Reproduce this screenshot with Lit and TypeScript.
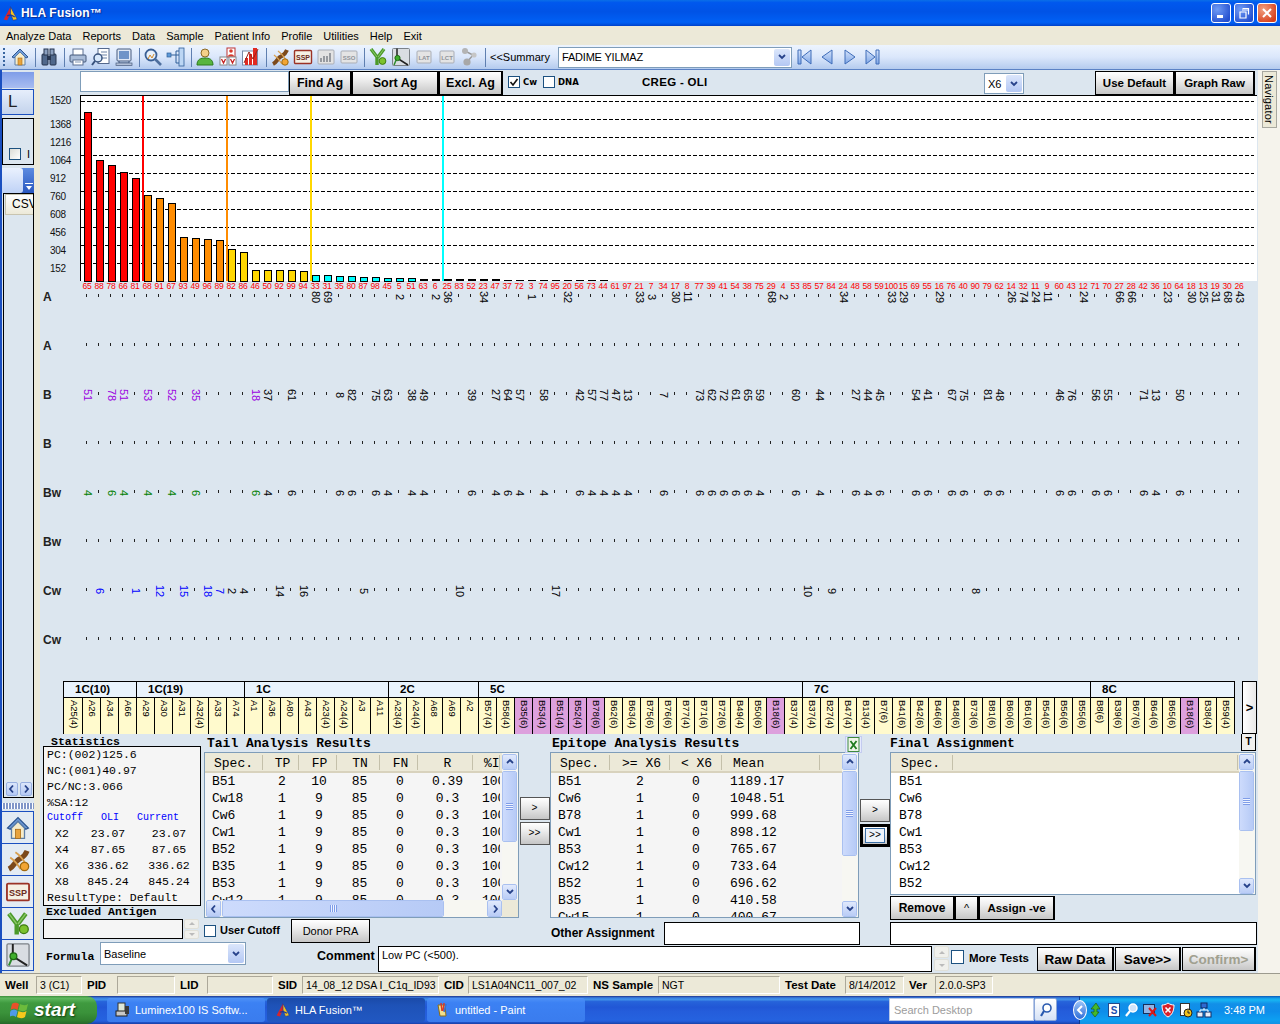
import { LitElement, html, svg, css, type TemplateResult } from 'lit';
import { customElement } from 'lit/decorators.js';

const LABELS = '65 88 78 66 81 68 91 67 93 49 96 89 82 86 46 50 92 99 94 33 31 35 80 87 98 45 5 51 63 6 25 83 52 23 47 37 72 3 74 95 20 56 73 44 61 97 21 7 34 17 8 77 39 41 54 38 75 29 4 53 85 57 84 24 48 58 59 100 15 69 55 16 76 40 90 79 62 14 32 11 9 60 43 12 71 70 27 28 42 36 10 64 18 13 19 30 26'.split(' ');
const TOPS = [112, 160, 165, 172, 178, 195, 198, 203, 237, 238, 239, 240, 249, 252, 270, 270, 270, 270, 271, 275, 275, 276, 276, 277, 277, 278, 278, 278];
const Y_LABELS: Array<[string, number]> = [['1520', 100], ['1368', 124], ['1216', 142], ['1064', 160], ['912', 178], ['760', 196], ['608', 214], ['456', 232], ['304', 250], ['152', 268]];

const B_ROW: Record<number, string> = { 0: '51', 2: '78', 3: '51', 5: '53', 7: '52', 9: '35', 14: '18', 15: '37', 17: '61', 21: '8', 22: '82', 24: '75', 25: '63', 27: '38', 28: '49', 32: '39', 34: '27', 35: '64', 36: '57', 38: '58', 41: '42', 42: '57', 43: '77', 44: '47', 45: '13', 48: '7', 51: '73', 52: '62', 53: '72', 54: '61', 55: '65', 56: '59', 59: '60', 61: '44', 64: '27', 65: '44', 66: '45', 69: '54', 70: '41', 72: '67', 73: '75', 75: '81', 76: '48', 81: '46', 82: '76', 84: '56', 85: '55', 88: '71', 89: '13', 91: '50' };
const BW_ROW: Record<number, string> = { 0: '4', 2: '6', 3: '4', 5: '4', 7: '4', 9: '6', 14: '6', 15: '4', 17: '6', 21: '6', 22: '6', 24: '6', 25: '4', 27: '4', 28: '4', 32: '6', 34: '4', 35: '6', 36: '4', 38: '4', 41: '6', 42: '4', 43: '4', 44: '4', 45: '4', 48: '6', 51: '6', 52: '6', 53: '6', 54: '6', 55: '6', 56: '4', 59: '6', 61: '4', 64: '6', 65: '4', 66: '6', 69: '6', 70: '6', 72: '6', 73: '6', 75: '6', 76: '6', 81: '6', 82: '6', 84: '6', 85: '6', 88: '6', 89: '4', 91: '6' };
const A_ROW: Record<number, string> = { 19: '80', 20: '69', 26: '2', 29: '2', 30: '36', 33: '34', 37: '1', 40: '32', 46: '33', 47: '3', 49: '30', 50: '11', 57: '68', 58: '2', 63: '34', 67: '33', 68: '29', 71: '29', 77: '26', 78: '74', 79: '24', 80: '11', 83: '24', 86: '66', 87: '66', 90: '23', 92: '30', 93: '25', 94: '31', 95: '68', 96: '43' };
const CW_ROW: Record<number, string> = { 1: '6', 4: '1', 6: '12', 8: '15', 10: '18', 11: '7', 12: '2', 13: '4', 16: '14', 18: '16', 23: '5', 31: '10', 39: '17', 60: '10', 62: '9', 74: '8' };
const PURPLE = new Set([0, 2, 3, 5, 7, 9, 14]);
const BLUE = new Set([1, 4, 6, 8, 10, 11]);

const ROWS: Array<{ name: string; cells: Record<number, string>; colored: Set<number>; color: string }> = [
  { name: 'A', cells: A_ROW, colored: new Set(), color: '#000' },
  { name: 'A', cells: {}, colored: new Set(), color: '#000' },
  { name: 'B', cells: B_ROW, colored: PURPLE, color: '#9a00e0' },
  { name: 'B', cells: {}, colored: new Set(), color: '#000' },
  { name: 'Bw', cells: BW_ROW, colored: PURPLE, color: '#008000' },
  { name: 'Bw', cells: {}, colored: new Set(), color: '#000' },
  { name: 'Cw', cells: CW_ROW, colored: BLUE, color: '#0000ff' },
  { name: 'Cw', cells: {}, colored: new Set(), color: '#000' },
];

const GROUPS: Array<[string, string[]]> = [
  ['1C(10)', ['A25(4)', 'A26', 'A34', 'A66']],
  ['1C(19)', ['A29', 'A30', 'A31', 'A32(4)', 'A33', 'A74']],
  ['1C', ['A1', 'A36', 'A80', 'A43', 'A23(4)', 'A24(4)', 'A3', 'A11']],
  ['2C', ['A23(4)', 'A24(4)', 'A68', 'A69', 'A2']],
  ['5C', ['B57(4)', 'B58(4)', '*B35(6)', '*B53(4)', '*B51(4)', '*B52(4)', '*B78(6)', 'B62(6)', 'B63(4)', 'B75(6)', 'B76(6)', 'B77(4)', 'B71(6)', 'B72(6)', 'B49(4)', 'B50(6)', '*B18(6)', 'B37(4)']],
  ['7C', ['B37(4)', 'B27(4)', 'B47(4)', 'B13(4)', 'B7(6)', 'B41(6)', 'B42(6)', 'B46(6)', 'B48(6)', 'B73(6)', 'B81(6)', 'B60(6)', 'B61(6)', 'B54(6)', 'B56(6)', 'B55(6)']],
  ['8C', ['B8(6)', 'B39(6)', 'B67(6)', 'B64(6)', 'B65(6)', '*B18(6)', 'B38(4)', 'B59(4)']],
];

const tip = (i: number) => 87 + 12 * i;

// 20x20 toolbar glyphs, also scaled up in the left strip
const ICONS: Record<string, TemplateResult> = {
  home: svg`<path d="M2 10 10 2l8 8-2 1-6-6-6 6z" fill="#6f9bd8" stroke="#2c5590"/><path d="M5 10v8h10v-8l-5-5z" fill="#f6eccb" stroke="#5d7fa8"/><rect x="8" y="11" width="4" height="7" fill="#e8a33c" stroke="#a86c16" stroke-width=".6"/>`,
  binoc: svg`<rect x="3" y="7" width="6" height="11" rx="1" fill="#50688c" stroke="#26344e"/><rect x="11" y="7" width="6" height="11" rx="1" fill="#50688c" stroke="#26344e"/><rect x="5" y="2" width="4" height="6" fill="#8ba0c0" stroke="#26344e"/><rect x="11" y="2" width="4" height="6" fill="#8ba0c0" stroke="#26344e"/><rect x="8" y="9" width="4" height="4" fill="#26344e"/>`,
  print: svg`<rect x="5" y="2" width="10" height="7" fill="#fff" stroke="#5a6f92"/><rect x="2" y="8" width="16" height="7" rx="1" fill="#a9bcd8" stroke="#44587a"/><rect x="5" y="13" width="10" height="5" fill="#fff" stroke="#5a6f92"/><path d="M7 15h6" stroke="#8296b4"/>`,
  preview: svg`<rect x="7" y="1.500" width="11" height="15" fill="#fff" stroke="#55698c"/><path d="M10 5h6M10 8h6M10 11h6" stroke="#6d82a5"/><circle cx="7" cy="11" r="4" fill="#d8e8fb" stroke="#38527c" stroke-width="1.500"/><path d="M4 14 1 18" stroke="#38527c" stroke-width="2"/>`,
  monitor: svg`<rect x="3" y="2" width="14" height="12" rx="1" fill="#dfe8f5" stroke="#465b7e"/><rect x="5" y="4" width="10" height="8" fill="#6f94c8"/><path d="M5 14v3h10v-3" fill="#8a9dbb" stroke="#465b7e"/><rect x="2" y="16" width="16" height="2.500" fill="#b3c1d8" stroke="#465b7e" stroke-width=".7"/>`,
  search: svg`<circle cx="8" cy="8" r="5.500" fill="#e8f1fc" stroke="#3a5f94" stroke-width="1.800"/><path d="m12 12 6 6" stroke="#4f6f9e" stroke-width="2.600"/><path d="m5 12 2-4 2 3 2-4" fill="none" stroke="#d08a2c"/>`,
  tree: svg`<rect x="1" y="6" width="4" height="4" fill="#5f9ad8" stroke="#2f5e98" stroke-width=".7"/><rect x="13" y="1" width="5" height="18" fill="#bcd6f4" stroke="#2f5e98" stroke-width=".8"/><path d="M5 8h8M13 4h-3v12h3" fill="none" stroke="#2f5e98"/>`,
  person: svg`<circle cx="10" cy="6" r="4" fill="#f4d089" stroke="#8c6a28"/><path d="M2 18c0-6 4-7 8-7s8 1 8 7z" fill="#58b53f" stroke="#2e7a1d"/>`,
  cards: svg`<rect x="9" y="1" width="8" height="9" fill="#fff" stroke="#b33"/><circle cx="13" cy="4" r="1.800" fill="#d8392c"/><path d="M10 9.500c0-3 6-3 6 0" fill="#d8392c"/><rect x="2" y="10" width="7" height="8" fill="#fff" stroke="#888"/><rect x="11" y="10" width="7" height="8" fill="#fff" stroke="#888"/><path d="m3.500 12 2 4 2-4M12.500 12l2 4 2-4" fill="none" stroke="#c62222" stroke-width="1.300"/>`,
  chart: svg`<rect x="1.500" y="4" width="15" height="14" fill="#fff" stroke="#7a8ca8"/><rect x="4" y="11" width="3" height="7" fill="#e12a20"/><rect x="8" y="7" width="3" height="11" fill="#e12a20"/><rect x="12" y="1" width="4" height="17" fill="#e12a20"/><path d="M3 16 8 5l4 7 5-10" fill="none" stroke="#9a2016"/>`,
  dna: svg`<path d="M3 17C7 15 7 12 10 10s5-2 7-7" fill="none" stroke="#7c4a1c" stroke-width="4"/><path d="M4 8c3 2 5 4 8 9M8 4c3 2 5 4 8 9" stroke="#d8a050" stroke-width="1.400" fill="none"/><circle cx="15" cy="15" r="3.200" fill="#f2a533" stroke="#a06a10"/>`,
  ssp: svg`<rect x="1.500" y="3.500" width="17" height="13" rx="1" fill="#f5f0e4" stroke="#9b3226" stroke-width="1.400"/><text x="10" y="13" font-size="7" font-weight="700" text-anchor="middle" fill="#6b2a20" font-family="Liberation Sans">SSP</text>`,
  graphoff: svg`<rect x="2" y="3" width="16" height="14" rx="1" fill="#e3e3e3" stroke="#a9adb5"/><path d="M5 15v-4M8 15V9M11 15v-6M14 15V6" stroke="#8e9298" stroke-width="1.800"/>`,
  sso: svg`<rect x="2" y="4" width="16" height="12" rx="1" fill="#e4e4e4" stroke="#a9adb5"/><text x="10" y="12.500" font-size="6" font-weight="700" text-anchor="middle" fill="#8e9298" font-family="Liberation Sans">SSO</text>`,
  yab: svg`<path d="M3 2l6 8v8M16 2l-6 8" fill="none" stroke="#4b9a2a" stroke-width="3.400"/><path d="M3 2l6 8M16 2l-6 8" fill="none" stroke="#8cc86a" stroke-width="1"/><circle cx="14.500" cy="14" r="3.400" fill="#7cc22e" stroke="#3e7c12"/>`,
  kin: svg`<rect x="1.500" y="1.500" width="17" height="17" rx="1" fill="#d9dde2" stroke="#7c8288"/><path d="M6 1.500V11l11 7" fill="none" stroke="#222" stroke-width="1.500"/><path d="M3 18 6 11" stroke="#2c8a2c" stroke-width="1.500"/><circle cx="6.500" cy="11" r="2.600" fill="#3fae2c" stroke="#1d6a12"/>`,
  lat: svg`<rect x="3" y="4" width="14" height="12" rx="1" fill="#e4e4e4" stroke="#a9adb5"/><text x="10" y="12.500" font-size="6" font-weight="700" text-anchor="middle" fill="#8e9298" font-family="Liberation Sans">LAT</text>`,
  lct: svg`<rect x="3" y="4" width="14" height="12" rx="1" fill="#e4e4e4" stroke="#a9adb5"/><text x="10" y="12.500" font-size="6" font-weight="700" text-anchor="middle" fill="#8e9298" font-family="Liberation Sans">LCT</text>`,
  mol: svg`<path d="M5 4l8 4-5 6" stroke="#999" stroke-width="1.400" fill="none"/><circle cx="5" cy="4" r="3" fill="#b4b4b4"/><circle cx="14" cy="8" r="2.600" fill="#c6c6c6"/><circle cx="7" cy="15" r="3.600" fill="#a8a8a8"/>`,
  logo: svg`<path d="M10 2 2 17l4 1 4-8z" fill="#d8252c"/><path d="M10 2l8 15-5 1-3-8z" fill="#f6c21c" stroke="#173a9c" stroke-width=".8"/><path d="M6 13c3-2 6-1 9 1" fill="none" stroke="#173a9c" stroke-width="1.400"/>`,
};

// system tray, left to right
const TRAY: TemplateResult[] = [
  svg`<path d="M8 1 3 7h3v3H3l4 5 4-5H9V7h3z" fill="#46b82a" stroke="#1d5e12" stroke-width=".7"/>`,
  svg`<rect x="2.500" y="1.500" width="11" height="13" fill="#fff" stroke="#234a8a"/><text x="8" y="12" font-size="10" font-weight="700" text-anchor="middle" fill="#1d4fb0" font-family="Liberation Sans">S</text>`,
  svg`<circle cx="9" cy="6" r="4" fill="#cfe4fb" stroke="#fff" stroke-width="1.500"/><path d="M6 9l-4 5" stroke="#fff" stroke-width="2.200"/>`,
  svg`<rect x="1.500" y="2.500" width="11" height="9" fill="#8fb4e6" stroke="#16305c"/><path d="m7 6 7 8m0-8-7 8" stroke="#d81818" stroke-width="2"/>`,
  svg`<path d="M8 1c2 1.500 4 2 6 2 0 6-2 10-6 12C4 13 2 9 2 3c2 0 4-.5 6-2z" fill="#d8202a" stroke="#fff"/><path d="m5.500 5.500 5 5m0-5-5 5" stroke="#fff" stroke-width="1.600"/>`,
  svg`<rect x="2.500" y="1.500" width="9" height="12" fill="#fff" stroke="#333"/><circle cx="10" cy="11" r="4" fill="#f2c21c" stroke="#222"/><path d="M10 8.500V11h2" stroke="#222" fill="none"/>`,
  svg`<rect x="5" y="1" width="6" height="5" fill="#2f6ad0" stroke="#0e2a66"/><rect x="1" y="10" width="6" height="5" fill="#e8eef8" stroke="#0e2a66"/><rect x="9" y="10" width="6" height="5" fill="#e8eef8" stroke="#0e2a66"/><path d="M8 6v2M4 10V8h8v2" stroke="#fff" fill="none"/>`,
];

const icon = (name: string, size = 20) =>
  html`<svg class="ic" width=${size} height=${size} viewBox="0 0 20 20">${ICONS[name]}</svg>`;

const chev = (dir: 'up' | 'down' | 'left' | 'right') => {
  const d = { up: 'M2 6 5 3l3 3', down: 'M2 3l3 3 3-3', left: 'M6 1.500 3 5l3 3.500', right: 'M4 1.500 7 5 4 8.500' }[dir];
  return html`<svg width="10" height="10" viewBox="0 0 10 10"><path d=${d} fill="none" stroke="#27428a" stroke-width="1.800"/></svg>`;
};

type Col = [number, string, number, number];

@customElement('app-root')
export class AppRoot extends LitElement {
  static styles = css`
    :host {
      display: flex;
      flex-direction: column;
      width: 1280px;
      height: 1024px;
      overflow: hidden;
      font-family: 'Liberation Sans', Arial, sans-serif;
      font-size: 11px;
      color: #000;
      background: #dce6ef;
    }
    svg { display: block; flex: none; }

    /* window chrome */
    .title {
      height: 26px;
      flex: none;
      display: flex;
      align-items: center;
      padding: 0 3px 0 2px;
      color: #fff;
      font-size: 12px;
      font-weight: 700;
      letter-spacing: .2px;
      text-shadow: 1px 1px 1px #0a2a90;
      background: linear-gradient(#0a6fe8 0, #0058ee 10%, #0053e6 45%, #0060f5 85%, #0055e5 92%, #0040c8 100%);
    }
    .title span { margin-left: 2px; flex: 1; }
    .wbtn {
      width: 20px;
      height: 20px;
      margin-left: 3px;
      border: 1px solid #fff;
      border-radius: 3px;
      background: radial-gradient(circle at 30% 30%, #6f9bf5, #2450d0 80%);
      display: flex;
      align-items: center;
      justify-content: center;
      box-sizing: border-box;
    }
    .wbtn.close { background: radial-gradient(circle at 30% 30%, #f0a080, #d8401c 80%); }

    .menu {
      height: 19px;
      flex: none;
      display: flex;
      align-items: center;
      gap: 11px;
      padding: 0 0 0 6px;
      background: #ece9d8;
      font-size: 11px;
    }

    .toolbar {
      height: 25px;
      flex: none;
      box-sizing: border-box;
      display: flex;
      align-items: center;
      padding-left: 8px;
      background: linear-gradient(#edf4fe, #dbe7fb 50%, #b4cbee);
      border-bottom: 1px solid #5b82c5;
    }
    .toolbar .grip {
      width: 2px;
      height: 18px;
      margin: 0 3px 0 -5px;
      background: repeating-linear-gradient(#39659f 0 2px, transparent 2px 4px);
    }
    .slot { width: 23px; display: flex; justify-content: center; flex: none; }
    .sep { width: 1px; height: 19px; background: #5f7fb0; margin: 0 1px 0 4px; flex: none; }
    .summary { margin-left: 3px; width: 68px; font-size: 11px; flex: none; }
    .combo {
      display: flex;
      box-sizing: border-box;
      border: 1px solid #7f9db9;
      background: #fff;
      align-items: stretch;
      flex: none;
    }
    .combo .val { flex: 1; padding-left: 3px; display: flex; align-items: center; overflow: hidden; white-space: nowrap; }
    .combo .arrow {
      width: 16px;
      margin: 1px;
      border-radius: 2px;
      background: linear-gradient(#dbe6fb, #b4c8f4);
      display: flex;
      align-items: center;
      justify-content: center;
    }
    .patient { width: 234px; height: 21px; font-size: 11px; letter-spacing: -.2px; }
    .nav { width: 23px; display: flex; justify-content: center; flex: none; }

    /* main */
    .main { height: 903px; flex: none; display: flex; }

    .left {
      width: 34px;
      flex: none;
      box-sizing: border-box;
      display: flex;
      flex-direction: column;
      border-left: 2px solid #1a4fc0;
      background: #dce6ef;
    }
    .l-top { height: 16px; margin-top: 2px; background: linear-gradient(#7f9de8, #a9bdf0); }
    .l-btn {
      height: 26px;
      margin-top: 1px;
      box-sizing: border-box;
      border: 1px solid #1a4fc0;
      border-left: none;
      background: linear-gradient(#e6eefb, #c3d3ec);
      font-size: 17px;
      font-weight: 400;
      padding-left: 6px;
      line-height: 24px;
      color: #222;
    }
    .l-box {
      height: 47px;
      margin: 3px 0 0 0;
      box-sizing: border-box;
      border: 1px solid #000;
      display: flex;
      align-items: flex-end;
      gap: 6px;
      padding: 0 0 4px 6px;
      overflow: hidden;
    }
    .l-box i { width: 12px; height: 12px; flex: none; border: 1px solid #1c5180; background: linear-gradient(135deg, #dcdcd6, #fff); box-sizing: border-box; }
    .l-box b { font-weight: 400; font-size: 11px; }
    .l-tab { height: 25px; margin-top: 3px; flex: none; display: flex; background: linear-gradient(#5d8be0, #2a58c0); }
    .l-tab div:first-child { width: 21px; background: linear-gradient(#eaf1fe, #bfd2f6); border-radius: 0 3px 3px 0; }
    .l-tab div:last-child { flex: 1; display: flex; align-items: flex-end; justify-content: center; padding-bottom: 2px; }
    .l-list {
      height: 605px;
      box-sizing: border-box;
      margin-left: 1px;
      border: 1px solid #000;
      display: flex;
      flex-direction: column;
      justify-content: space-between;
      overflow: hidden;
    }
    .csv {
      width: 40px;
      height: 21px;
      flex: none;
      margin-left: 1px;
      box-sizing: border-box;
      border: 1px solid #c8c4b0;
      background: linear-gradient(#fff, #ece9d8);
      padding-left: 6px;
      line-height: 19px;
      font-size: 12px;
    }
    .l-arrows { display: flex; gap: 2px; padding: 0 0 0 2px; margin-bottom: 1px; }
    .l-arrows span { width: 12px; height: 14px; display: flex; align-items: center; justify-content: center; background: linear-gradient(#dbe6fb, #b4c8f4); border: 1px solid #98b0e0; border-radius: 2px; box-sizing: border-box; }
    .l-grip {
      height: 6px;
      margin-top: 5px;
      margin-bottom: 2px;
      flex: none;
      background: #8096c8 repeating-linear-gradient(90deg, #fff 0 1px, transparent 1px 3px);
    }
    .l-ic {
      height: 32px;
      flex: none;
      box-sizing: border-box;
      border: 1px solid #1a4fc0;
      border-left: none;
      border-bottom: none;
      background: #e3ebf3;
      display: flex;
      align-items: center;
      justify-content: center;
    }
    .l-ic:last-child { border-bottom: 1px solid #1a4fc0; }

    .split { width: 6px; flex: none; background: #ece9d8; }
    .rail { width: 22px; flex: none; background: #f5f3ec; }
    .rail div {
      margin: 1px 0 0 4px;
      height: 57px;
      width: 15px;
      box-sizing: border-box;
      border: 1px solid #a8a8a0;
      background: #ece9d8;
      writing-mode: vertical-rl;
      font-size: 11px;
      line-height: 14px;
      text-align: center;
      letter-spacing: .2px;
    }

    .content { width: 1218px; flex: none; display: flex; flex-direction: column; }
    .toprow { height: 25px; flex: none; display: flex; align-items: flex-start; padding: 1px 0 0 40px; box-sizing: border-box; }
    .find { width: 209px; height: 21px; box-sizing: border-box; border: 1px solid #7f9db9; background: #fff; flex: none; }
    .btn {
      box-sizing: border-box;
      border: 1px solid #000;
      border-right-width: 2px;
      background: linear-gradient(#fff, #eee 35%, #c6c6c6);
      font-weight: 700;
      display: flex;
      align-items: center;
      justify-content: center;
      flex: none;
      white-space: nowrap;
    }
    .tb { height: 24px; font-size: 12.5px; }
    .tb.s { font-size: 11.5px; }
    .tb.l { font-size: 13.5px; }
    .chk {
      width: 12px;
      height: 12px;
      box-sizing: border-box;
      border: 1px solid #1c5180;
      background: #fff;
      flex: none;
      display: flex;
    }
    .flag { display: flex; align-items: center; gap: 3px; height: 22px; font-family: 'DejaVu Sans', sans-serif; font-weight: 700; font-size: 8.5px; flex: none; }
    .creg { margin-left: 60px; width: 342px; height: 22px; line-height: 23px; font-weight: 700; font-size: 11.5px; letter-spacing: .3px; flex: none; }
    .x6 { width: 40px; height: 21px; margin-top: 2px; font-size: 11px; }

    .rowlabel { font-family: 'Liberation Sans', sans-serif; }

    /* allele strip */
    .strip { height: 53px; flex: none; margin: 1px 0 0 23px; display: flex; }
    .groups {
      display: grid;
      grid-template-columns: repeat(65, 18px);
      grid-template-rows: 16px 36px;
      width: 1172px;
      height: 53px;
      box-sizing: border-box;
      border: 1px solid #000;
      flex: none;
    }
    .gh {
      background: #e9f3fc;
      font-weight: 700;
      font-size: 11.5px;
      line-height: 15px;
      padding-left: 11px;
      border-left: 1px solid #000;
      border-bottom: 1px solid #000;
      box-sizing: border-box;
    }
    .gh:first-child { border-left: none; }
    .al {
      background: #fffacd;
      border-left: 1px solid #000;
      box-sizing: border-box;
      writing-mode: vertical-rl;
      font-size: 9.5px;
      line-height: 16px;
      padding-top: 2px;
      white-space: nowrap;
      overflow: hidden;
    }
    .al.hit { background: #dda0dd; }
    .al.first { border-left: none; }
    .more {
      width: 15px;
      height: 53px;
      margin-left: 7px;
      box-sizing: border-box;
      border: 1px solid #000;
      background: linear-gradient(90deg, #fff, #e8e8e8);
      display: flex;
      align-items: center;
      justify-content: center;
      font-weight: 700;
      font-size: 13px;
      flex: none;
    }

    /* bottom panels */
    .panels { flex: 1; display: flex; flex-direction: column; padding-left: 3px; min-height: 0; }
    .r1 { height: 185px; flex: none; display: flex; }
    .r2 { height: 27px; flex: none; display: flex; }
    .r3 { height: 27px; flex: none; display: flex; }
    .r2 > *, .r3 > * { flex: none; }
    .hd { font-family: 'Liberation Mono', 'Courier New', monospace; font-weight: 700; font-size: 13px; height: 18px; line-height: 19px; display: flex; white-space: nowrap; }
    .c1 { width: 161px; flex: none; }
    .c2 { width: 315px; flex: none; }
    .c3 { width: 310px; flex: none; }
    .c4 { width: 367px; flex: none; }
    .mid { flex: none; display: flex; flex-direction: column; align-items: center; }
    .arrowb { width: 30px; height: 23px; font-weight: 400; font-size: 10px; font-family: 'Liberation Mono', monospace; border-color: #555; border-right-width: 1px; }
    .focus { border: 3px solid #000; }
    .focus span { border: 1px solid #3a6ea5; padding: 1px 3px; background: #eef3fa; line-height: 11px; }
    .stat-h { height: 12px; font-family: 'Liberation Mono', monospace; font-weight: 700; font-size: 11.5px; line-height: 15px; padding-left: 8px; }
    .stats {
      width: 158px;
      height: 160px;
      box-sizing: border-box;
      border: 1px solid #000;
      background: #f5f5f5;
      padding-left: 3px;
      font-family: 'Liberation Mono', monospace;
      font-size: 11.5px;
      line-height: 16px;
      overflow: hidden;
    }
    .stats .ln { height: 16px; white-space: pre; }
    .stats .cut { display: grid; grid-template-columns: 54px 36px 60px; height: 14px; line-height: 14px; color: #0000ff; font-size: 10px; margin-bottom: 1px; }
    .stats .xr { display: grid; grid-template-columns: 28px 66px 56px; height: 16px; }
    .stats .xr span { text-align: center; }
    .stats .xr span:first-child { padding-left: 8px; text-align: left; }
    .exc-h { font-family: 'Liberation Mono', monospace; font-weight: 700; font-size: 11.5px; line-height: 12px; height: 13px; padding-left: 3px; white-space: nowrap; }

    .frame { box-sizing: border-box; border: 1px solid #7f9db9; background: #ece9d8; display: flex; flex-direction: column; overflow: hidden; }
    .frame-top { flex: 1; min-height: 0; display: flex; }
    .tbl { flex: 1; min-width: 0; overflow: hidden; background: #f5f5f5; font-family: 'Liberation Mono', monospace; font-size: 13px; }
    .tbl.white { background: #fff; }
    .tr { display: grid; height: 17px; line-height: 17px; white-space: nowrap; }
    .tr.head { height: 20px; background: #ece9d8; border-bottom: 2px solid #d8d2bd; box-sizing: border-box; }
    .tr.head span { border-right: 1px solid #c4c0aa; height: 15px; line-height: 17px; margin-top: 2px; box-sizing: border-box; }
    .tr span { overflow: hidden; }
    .vbar { width: 16px; flex: none; display: flex; flex-direction: column; background: #f7f7f2; box-sizing: border-box; padding: 1px 1px 0 0; }
    .hbar { height: 17px; flex: none; display: flex; align-items: stretch; padding-left: 1px; background: #f7f7f2; margin-right: 16px; }
    .sbb { flex: none; display: flex; align-items: center; justify-content: center; background: linear-gradient(#e0e9fc, #b9ccf6); border: 1px solid #fff; outline: 1px solid #a9c0f0; outline-offset: -1px; border-radius: 2px; box-sizing: border-box; }
    .vbar .sbb { height: 16px; }
    .hbar .sbb { width: 15px; }
    .thumb { flex: none; background: linear-gradient(90deg, #cddbfc, #b6caf6); border: 1px solid #fff; outline: 1px solid #a9c0f0; outline-offset: -1px; border-radius: 2px; box-sizing: border-box; display: flex; align-items: center; justify-content: center; }
    .thumb::after { content: ''; width: 7px; height: 7px; background: repeating-linear-gradient(#7f9de8 0 1px, #eef3ff 1px 2px); }
    .hbar .thumb::after { background: repeating-linear-gradient(90deg, #7f9de8 0 1px, #eef3ff 1px 2px); }
    .sp { flex: 1; }

    .xl { width: 17px; height: 17px; margin: 2px -2px 0 auto; }
    .tbtn {
      width: 15px;
      height: 17px;
      margin: 0 0 0 auto;
      box-sizing: border-box;
      border: 1px solid #000;
      border-top: none;
      background: #f0f0ee;
      font-family: 'Liberation Sans', sans-serif;
      font-size: 10px;
      text-align: center;
      line-height: 16px;
    }
    .actions { display: flex; height: 24px; margin-top: 1px; }
    .input { box-sizing: border-box; border: 1px solid #000; background: #fff; flex: none; }
    .spin { width: 15px; display: flex; flex-direction: column; gap: 1px; flex: none; }
    .spin span { flex: 1; background: #f0f0ec; border: 1px solid #e0e0d8; border-radius: 2px; box-sizing: border-box; display: flex; align-items: center; justify-content: center; }
    .tri { width: 0; height: 0; border-left: 3px solid transparent; border-right: 3px solid transparent; }
    .tri.u { border-bottom: 3px solid #bbb; }
    .tri.d { border-top: 3px solid #bbb; }
    .b12 { font-weight: 700; font-size: 12px; white-space: nowrap; }
    .donor { font-weight: 400; font-size: 11px; border-right-width: 1px; }
    .form { font-family: 'Liberation Mono', monospace; font-weight: 700; font-size: 11.5px; box-sizing: border-box; }
    .formula { width: 146px; height: 23px; margin-top: -4px; font-size: 11px; }

    /* status + taskbar */
    .status {
      height: 23px;
      flex: none;
      box-sizing: border-box;
      display: flex;
      background: #ece9d8;
      border-top: 1px solid #9c9a8e;
      font-size: 10.5px;
    }
    .st { box-sizing: border-box; display: flex; align-items: center; padding-left: 5px; white-space: nowrap; overflow: hidden; flex: none; }
    .st.k { font-weight: 700; font-size: 11.5px; }
    .st.v { border: 1px solid #fff; border-left-color: #aca899; border-top-color: #aca899; margin: 2px 0; padding-left: 3px; }

    .task {
      height: 28px;
      flex: none;
      display: flex;
      color: #fff;
      background: linear-gradient(#1f2f86 0, #3165c4 4%, #3682e5 8%, #4490e6 12%, #3883e5 15%, #2663da 20%, #2157d6 40%, #245ddb 55%, #2562df 86%, #2158d4 92%, #1941a5 100%);
    }
    .start {
      width: 97px;
      flex: none;
      display: flex;
      align-items: center;
      gap: 4px;
      padding-left: 10px;
      box-sizing: border-box;
      border-radius: 0 10px 10px 0;
      background: linear-gradient(#3c8f3c 0, #5fb85f 8%, #3f9a3f 25%, #3a923a 60%, #2f7e2f 88%, #25672a 100%);
      font: italic 700 19px 'Liberation Sans', sans-serif;
      text-shadow: 1px 1px 2px #0d3d0d;
    }
    .ti {
      width: 158px;
      height: 24px;
      margin: 2px 2px 0 0;
      flex: none;
      box-sizing: border-box;
      display: flex;
      align-items: center;
      gap: 4px;
      padding-left: 8px;
      border-radius: 3px;
      background: linear-gradient(#4f92f7, #3c81f3 20%, #3a7cee);
      font-size: 11px;
      white-space: nowrap;
      overflow: hidden;
    }
    .ti.on { background: linear-gradient(#1a4aa8, #1e52b7 30%, #2158c2); }
    .tsearch {
      width: 145px;
      height: 23px;
      margin: 2px 0 0 302px;
      box-sizing: border-box;
      background: #fff;
      color: #9c9c9c;
      display: flex;
      align-items: center;
      padding-left: 4px;
      border: 1px solid #b8c8e8;
      flex: none;
    }
    .tgo { width: 23px; height: 23px; margin: 2px 0 0 0; flex: none; box-sizing: border-box; background: linear-gradient(#fff, #d6e2f6); border: 1px solid #8aa6d8; border-radius: 2px; display: flex; align-items: center; justify-content: center; }
    .tray {
      width: 201px;
      margin-left: 22px;
      flex: none;
      display: flex;
      align-items: center;
      box-sizing: border-box;
      background: linear-gradient(#0c59b9, #139ee9 8%, #18b5f2 14%, #1290e8 28%, #0d8dea 55%, #0d9ff1 85%, #1392e4);
      border-left: 1px solid #0c3a90;
      font-size: 11px;
    }
    .tray .back { width: 14px; height: 20px; margin-left: -7px; flex: none; border-radius: 50%; background: linear-gradient(#9cc4f8, #2f6ed8); border: 1px solid #fff; box-sizing: border-box; display: flex; align-items: center; justify-content: center; }
    .tray .icons { display: flex; gap: 2px; margin-left: 1px; width: 130px; flex: none; }
    .tray .clock { margin-left: 6px; white-space: nowrap; }
  `;

  private vbar(thumb: number, gap = 1) {
    return html`<div class="vbar">
      <div class="sbb">${chev('up')}</div>
      <div class="thumb" style="height:${thumb}px;margin-top:${gap}px"></div>
      <div class="sp"></div>
      <div class="sbb">${chev('down')}</div>
    </div>`;
  }

  private table(cols: Col[], heads: string[], rows: string[][], white = false) {
    const tpl = `grid-template-columns:${cols.map((c) => c[0] + 'px').join(' ')}`;
    return html`<div class="tbl ${white ? 'white' : ''}">
      <div class="tr head" style=${tpl}>
        ${heads.map((h, i) => html`<span style="text-align:${cols[i][1]};padding-left:${cols[i][3]}px">${h}</span>`)}
      </div>
      ${rows.map((r) => html`<div class="tr" style=${tpl}>
        ${r.map((v, i) => html`<span style="text-align:${cols[i][1]};padding-left:${cols[i][2]}px">${v}</span>`)}
      </div>`)}
    </div>`;
  }

  private chart() {
    const ROW0 = 294;
    const PITCH = 49;
    return html`<svg width="1218" height="585" viewBox="40 95 1218 585">
      <rect x="80" y="95" width="1177" height="186" fill="#fff"/>
      <path d="M80 95.500H1257M80.500 95V281" stroke="#000" fill="none"/>
      ${[101, 119, 137, 155, 173, 191, 209, 227, 245, 263].map(
        (y) => svg`<line x1="81" x2="1254" y1=${y + 0.5} y2=${y + 0.5} stroke="#000" stroke-dasharray="4 2"/>`
      )}
      ${Y_LABELS.map(
        ([t, y]) => svg`<text x="50" y=${y + 4} font-size="10" letter-spacing="-.3" fill="#111">${t}</text>`
      )}
      ${TOPS.map((top, i) => {
        const fill = i < 5 ? '#ff0000' : i < 12 ? '#ff8c00' : i < 19 ? '#ffd700' : '#00ffff';
        return svg`<rect x=${84.5 + 12 * i} y=${top + 0.5} width="7" height=${281 - top} fill=${fill} stroke="#000"/>`;
      })}
      ${LABELS.slice(28, 44).map((_, k) => {
        const i = k + 28;
        const h = i < 35 ? 2 : 1;
        return svg`<rect x=${84 + 12 * i} y=${281 - h} width="8" height=${h} fill="#000"/>`;
      })}
      ${[[142, '#ff0000'], [226, '#ff8c00'], [310, '#ffd700'], [442, '#00ffff']].map(
        ([x, c]) => svg`<rect x=${x} y="96" width="2" height="185" fill=${c}/>`
      )}
      ${LABELS.map(
        (t, i) => svg`<text x=${tip(i)} y="289" font-size="8.500" letter-spacing="-.3" text-anchor="middle" fill="#ff0000">${t}</text>`
      )}
      ${ROWS.map((row, k) => {
        const top = ROW0 + PITCH * k;
        return svg`
          <text class="rowlabel" x="43" y=${top + 7} font-size="12" font-weight="700" fill="#222">${row.name}</text>
          ${LABELS.map((_, i) => {
            const v = row.cells[i];
            if (v === undefined) return svg`<rect x=${tip(i) - 1} y=${top} width="1" height="3" fill="#222"/>`;
            const fill = row.colored.has(i) ? row.color : '#000';
            return svg`<text transform="translate(${tip(i) - 3} ${top + 3}) rotate(90)" font-size="11" text-anchor="middle" fill=${fill}>${v}</text>`;
          })}
        `;
      })}
    </svg>`;
  }

  private strip() {
    return html`<div class="strip">
      <div class="groups">
        ${GROUPS.map(([g, a]) => html`<div class="gh" style="grid-column:span ${a.length}">${g}</div>`)}
        ${GROUPS.flatMap(([, a]) => a).map((name, i) => {
          const hit = name.startsWith('*');
          return html`<div class="al ${hit ? 'hit' : ''} ${i === 0 ? 'first' : ''}">${hit ? name.slice(1) : name}</div>`;
        })}
      </div>
      <div class="more">&gt;</div>
    </div>`;
  }

  private panels() {
    const tail = [['B51', '2', '10', '85', '0', '0.39', '100'], ...['Cw18', 'Cw6', 'Cw1', 'B52', 'B35', 'B53', 'Cw12'].map((s) => [s, '1', '9', '85', '0', '0.3', '100'])];
    const epi = [['B51', '2', '0', '1189.17'], ['Cw6', '1', '0', '1048.51'], ['B78', '1', '0', '999.68'], ['Cw1', '1', '0', '898.12'], ['B53', '1', '0', '765.67'], ['Cw12', '1', '0', '733.64'], ['B52', '1', '0', '696.62'], ['B35', '1', '0', '410.58'], ['Cw15', '1', '0', '400.67']];
    const fin = ['B51', 'Cw6', 'B78', 'Cw1', 'B53', 'Cw12', 'B52'].map((s) => [s]);
    return html`<div class="panels">
      <div class="r1">
        <div class="c1">
          <div class="stat-h">Statistics</div>
          <div class="stats">
            ${['PC:(002)125.6', 'NC:(001)40.97', 'PC/NC:3.066', '%SA:12'].map((l) => html`<div class="ln">${l}</div>`)}
            <div class="cut"><span>Cutoff</span><span>OLI</span><span>Current</span></div>
            ${[['X2', '23.07'], ['X4', '87.65'], ['X6', '336.62'], ['X8', '845.24']].map(
              ([x, v]) => html`<div class="xr"><span>${x}</span><span>${v}</span><span>${v}</span></div>`
            )}
            <div class="ln">ResultType: Default</div>
          </div>
          <div class="exc-h">Excluded Antigen</div>
        </div>
        <div class="c2">
          <div class="hd" style="padding-left:3px">Tail Analysis Results</div>
          <div class="frame" style="height:166px;width:315px">
            <div class="frame-top">
              ${this.table(
                [[58, 'left', 7, 9], [36, 'center', 2, 4], [38, 'center', 2, 4], [43, 'center', 2, 4], [38, 'center', 2, 4], [55, 'center', 4, 5], [27, 'left', 9, 11]],
                ['Spec.', 'TP', 'FP', 'TN', 'FN', 'R', '%I'],
                tail
              )}
              ${this.vbar(71)}
            </div>
            <div class="hbar">
              <div class="sbb">${chev('left')}</div>
              <div class="thumb" style="width:222px;margin-left:1px"></div>
              <div class="sp"></div>
              <div class="sbb">${chev('right')}</div>
            </div>
          </div>
        </div>
        <div class="mid" style="width:31px;padding-top:63px;gap:2px">
          <div class="btn arrowb">&gt;</div>
          <div class="btn arrowb">&gt;&gt;</div>
        </div>
        <div class="c3">
          <div class="hd" style="padding-left:2px">Epitope Analysis Results
            <svg class="xl" viewBox="0 0 17 17"><rect x=".5" y=".5" width="16" height="16" fill="#e6eaff" stroke="#c4ccf0"/><rect x="3" y="1.500" width="11" height="14" fill="#eef5e8" stroke="#3e8a3e"/><path d="m5.500 5 6 8M11.500 5l-6 8" stroke="#1e7a1e" stroke-width="1.800"/></svg>
          </div>
          <div class="frame" style="height:166px;width:309px">
            <div class="frame-top">
              ${this.table(
                [[59, 'left', 7, 9], [60, 'center', 0, 4], [52, 'center', 0, 2], [98, 'left', 8, 11], [23, 'left', 0, 0]],
                ['Spec.', '>= X6', '< X6', 'Mean', ''],
                epi
              )}
              ${this.vbar(85)}
            </div>
          </div>
        </div>
        <div class="mid" style="width:30px;padding-top:65px;gap:2px">
          <div class="btn arrowb">&gt;</div>
          <div class="btn arrowb focus"><span>&gt;&gt;</span></div>
        </div>
        <div class="c4">
          <div class="hd" style="padding-right:1px">Final Assignment<div class="tbtn">T</div></div>
          <div class="frame" style="height:143px;width:366px">
            <div class="frame-top">
              ${this.table([[62, 'left', 8, 10], [285, 'left', 0, 0]], ['Spec.', ''], fin, true)}
              ${this.vbar(60)}
            </div>
          </div>
          <div class="actions">
            <div class="btn b12" style="width:65px">Remove</div>
            <div class="btn" style="width:24px;font-weight:400">^</div>
            <div class="btn b12" style="width:76px;font-size:11.500px">Assign -ve</div>
          </div>
        </div>
      </div>
      <div class="r2">
        <div class="input" style="width:140px;height:20px;background:#f5f5f5"></div>
        <div class="spin" style="height:20px;margin-left:1px"><span><i class="tri u"></i></span><span><i class="tri d"></i></span></div>
        <div class="chk" style="margin:6px 0 0 5px"></div>
        <div class="b12" style="margin:5px 0 0 4px;width:71px;font-size:11px">User Cutoff</div>
        <div class="btn donor" style="width:79px;height:24px">Donor PRA</div>
        <div class="b12" style="margin:7px 0 0 181px;width:113px">Other Assignment</div>
        <div class="input" style="width:196px;height:23px;margin-top:3px"></div>
        <div class="input" style="width:367px;height:23px;margin:3px 0 0 30px"></div>
      </div>
      <div class="r3">
        <div class="form" style="padding:4px 0 0 3px;width:57px">Formula</div>
        <div class="combo formula">
          <div class="val">Baseline</div>
          <div class="arrow">${chev('down')}</div>
        </div>
        <div class="b12" style="margin:3px 0 0 71px;width:61px;font-size:12.500px">Comment</div>
        <div class="input" style="width:554px;height:26px;padding:2px 3px;font-size:11px">Low PC (&lt;500).</div>
        <div class="spin" style="height:25px;margin-left:2px"><span><i class="tri u"></i></span><span><i class="tri d"></i></span></div>
        <div class="chk" style="width:13px;height:14px;margin:4px 0 0 2px"></div>
        <div class="b12" style="margin:6px 0 0 5px;width:68px;font-size:11.500px">More Tests</div>
        <div class="btn tb l" style="width:77px;margin-top:1px">Raw Data</div>
        <div class="btn tb l" style="width:66px;margin:1px 0 0 1px">Save&gt;&gt;</div>
        <div class="btn tb l" style="width:74px;margin:1px 0 0 1px;color:#a0a090">Confirm&gt;</div>
      </div>
    </div>`;
  }

  private statusBar() {
    const cells: Array<[number, string, boolean]> = [
      [36, 'Well', true], [46, '3 (C1)', false], [35, 'PID', true], [58, '', false], [32, 'LID', true], [66, '', false],
      [29, 'SID', true], [137, '14_08_12 DSA I_C1q_ID93', false], [29, 'CID', true], [120, 'LS1A04NC11_007_02', false],
      [70, 'NS Sample', true], [122, 'NGT', false], [65, 'Test Date', true], [59, '8/14/2012', false], [31, 'Ver', true], [58, '2.0.0-SP3', false],
    ];
    return html`<div class="status">
      ${cells.map(([w, t, k]) => html`<div class="st ${k ? 'k' : 'v'}" style="width:${w}px">${t}</div>`)}
    </div>`;
  }

  private taskbar() {
    return html`<div class="task">
      <div class="start">
        <svg width="20" height="20" viewBox="0 0 20 20">
          <path d="M2 4c3-2 5-1 7 0l-1.500 6c-2-1-4-2-7 0z" fill="#e8502a"/>
          <path d="M10 4c2 1 5 2 8 0l-1.500 6c-3 2-6 1-8 0z" fill="#6cbb3c"/>
          <path d="M.5 11c3-2 5-1 7 0L6 17c-2-1-4-2-7 0z" fill="#4f9ae8"/>
          <path d="M8.500 11c2 1 5 2 8 0L15 17c-3 2-6 1-8 0z" fill="#f6c81c"/>
        </svg>
        start
      </div>
      <div style="width:10px;flex:none"></div>
      <div class="ti">
        <svg width="16" height="16" viewBox="0 0 16 16"><rect x="3" y="1" width="7" height="9" fill="#dfe8d8" stroke="#333"/><rect x="1" y="9" width="11" height="5" fill="#c8c8c8" stroke="#222"/><rect x="10" y="4" width="4" height="8" fill="#3a3a3a"/></svg>
        Luminex100 IS Softw...
      </div>
      <div class="ti on">${icon('logo', 16)}HLA Fusion™</div>
      <div class="ti">
        <svg width="16" height="16" viewBox="0 0 16 16"><path d="M3 3h7l1 11H5z" fill="#f2e08c" stroke="#8a6a1a"/><path d="M6 1l1 8M9 1 8 9" stroke="#d83a2a" stroke-width="1.500"/><path d="M11 2l-2 8" stroke="#3a6ed0" stroke-width="1.500"/></svg>
        untitled - Paint
      </div>
      <div class="tsearch">Search Desktop</div>
      <div class="tgo"><svg width="14" height="16" viewBox="0 0 14 16"><circle cx="8" cy="6" r="4" fill="#fff" stroke="#2a5ab0" stroke-width="1.600"/><path d="M5 9 2 14" stroke="#2a5ab0" stroke-width="2.200"/></svg></div>
      <div class="tray">
        <div class="back"><svg width="8" height="10" viewBox="0 0 8 10"><path d="M6 1 2 5l4 4" fill="none" stroke="#fff" stroke-width="2"/></svg></div>
        <div class="icons">
          ${TRAY.map((g) => html`<svg width="16" height="16" viewBox="0 0 16 16">${g}</svg>`)}
        </div>
        <div class="clock">3:48 PM</div>
      </div>
    </div>`;
  }

  render(): TemplateResult {
    const slots = (names: string[]) => names.map((n) => html`<div class="slot">${icon(n)}</div>`);
    const navArrow = (d: string) => html`<div class="nav"><svg width="18" height="18" viewBox="0 0 18 18"><defs><linearGradient id="ng" x1="0" y1="0" x2="0" y2="1"><stop offset="0" stop-color="#d6e4fb"/><stop offset="1" stop-color="#7ea6e6"/></linearGradient></defs><path d=${d} fill="url(#ng)" stroke="#3e6cb8" stroke-linejoin="round"/></svg></div>`;
    return html`
      <div class="title">
        ${icon('logo', 17)}
        <span>HLA Fusion™</span>
        <div class="wbtn"><svg width="12" height="12" viewBox="0 0 12 12"><rect x="2" y="8" width="6" height="3" fill="#fff"/></svg></div>
        <div class="wbtn"><svg width="14" height="14" viewBox="0 0 14 14"><path d="M5.500 2.500h6v6M5 4h6M3 6h6v6H3z" fill="none" stroke="#fff" stroke-width="1.200"/></svg></div>
        <div class="wbtn close"><svg width="14" height="14" viewBox="0 0 14 14"><path d="m3 3 8 8M11 3l-8 8" stroke="#fff" stroke-width="2"/></svg></div>
      </div>
      <div class="menu">
        ${['Analyze Data', 'Reports', 'Data', 'Sample', 'Patient Info', 'Profile', 'Utilities', 'Help', 'Exit'].map((m) => html`<span>${m}</span>`)}
      </div>
      <div class="toolbar">
        <div class="grip"></div>
        ${slots(['home'])}<div class="sep"></div>
        ${slots(['binoc'])}<div class="sep"></div>
        ${slots(['print', 'preview', 'monitor'])}<div class="sep"></div>
        ${slots(['search', 'tree'])}<div class="sep"></div>
        ${slots(['person', 'cards', 'chart'])}<div class="sep"></div>
        ${slots(['dna', 'ssp', 'graphoff', 'sso'])}<div class="sep"></div>
        ${slots(['yab', 'kin', 'lat', 'lct', 'mol'])}<div class="sep"></div>
        <div class="summary">&lt;&lt;Summary</div>
        <div class="combo patient">
          <div class="val">FADIME YILMAZ</div>
          <div class="arrow">${chev('down')}</div>
        </div>
        ${navArrow('M16 2 7 9l9 7zM3 2h3v14H3z')}
        ${navArrow('M14 2 4 9l10 7z')}
        ${navArrow('M4 2l10 7-10 7z')}
        ${navArrow('M2 2l9 7-9 7zM12 2h3v14h-3z')}
      </div>
      <div class="main">
        <div class="left">
          <div class="l-top"></div>
          <div class="l-btn">L</div>
          <div class="l-box"><i></i><b>I</b></div>
          <div class="l-tab"><div></div><div><svg width="8" height="8" viewBox="0 0 8 8"><path d="M0 0h8v1H0zM1 3h6L4 7z" fill="#fff"/></svg></div></div>
          <div class="l-list">
            <div class="csv">CSV</div>
            <div class="l-arrows"><span>${chev('left')}</span><span>${chev('right')}</span></div>
          </div>
          <div class="l-grip"></div>
          ${['home', 'dna', 'ssp', 'yab', 'kin'].map((n) => html`<div class="l-ic">${icon(n, 26)}</div>`)}
        </div>
        <div class="split"></div>
        <div class="content">
          <div class="toprow">
            <div class="find"></div>
            <div class="btn tb" style="width:63px">Find Ag</div>
            <div class="btn tb" style="width:87px">Sort Ag</div>
            <div class="btn tb" style="width:64px">Excl. Ag</div>
            <div class="flag" style="margin-left:5px;width:35px">
              <div class="chk"><svg width="10" height="10" viewBox="0 0 10 10"><path d="m1.500 5 2.500 3 4.500-6" fill="none" stroke="#111" stroke-width="1.600"/></svg></div>Cw
            </div>
            <div class="flag" style="width:39px"><div class="chk"></div>DNA</div>
            <div class="creg">CREG - OLI</div>
            <div class="combo x6"><div class="val">X6</div><div class="arrow">${chev('down')}</div></div>
            <div style="width:71px;flex:none"></div>
            <div class="btn tb s" style="width:80px">Use Default</div>
            <div class="btn tb s" style="width:80px">Graph Raw</div>
          </div>
          ${this.chart()}
          ${this.strip()}
          ${this.panels()}
        </div>
        <div class="rail"><div>Navigator</div></div>
      </div>
      ${this.statusBar()}
      ${this.taskbar()}
    `;
  }
}
